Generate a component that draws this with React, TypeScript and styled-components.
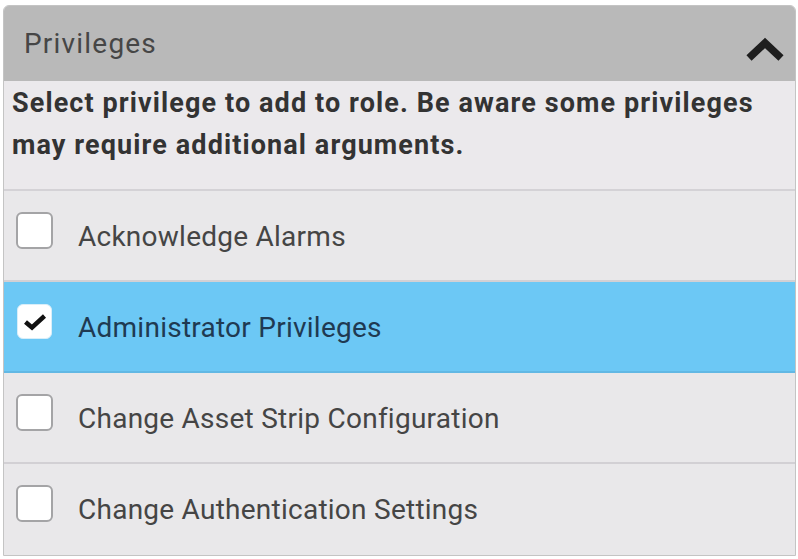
import styled, { createGlobalStyle } from 'styled-components';

const GlobalStyle = createGlobalStyle`
  body {
    margin: 0;
    background: #ffffff;
    font-family: Roboto, "Liberation Sans", sans-serif;
  }
`;

const privileges = [
  { name: 'Acknowledge Alarms', checked: false },
  { name: 'Administrator Privileges', checked: true },
  { name: 'Change Asset Strip Configuration', checked: false },
  { name: 'Change Authentication Settings', checked: false },
];

export default function App() {
  return (
    <>
      <GlobalStyle />
      <Panel>
        <Header>
          <Title>Privileges</Title>
          <Chevron width="40" height="26" viewBox="0 0 40 26">
            <path d="M4 22 L20 7 L36 22" fill="none" stroke="#1e1e1e" strokeWidth="7.5" />
          </Chevron>
        </Header>
        <Description>
          Select privilege to add to role. Be aware some privileges may require additional arguments.
        </Description>
        <List>
          {privileges.map((p) => (
            <Row key={p.name} selected={p.checked}>
              <Box checked={p.checked}>
                {p.checked && (
                  <svg width="24" height="20" viewBox="0 0 24 20">
                    <path d="M2.5 10 L9 15.5 L21.5 4" fill="none" stroke="#111" strokeWidth="4.5" />
                  </svg>
                )}
              </Box>
              <Label selected={p.checked}>{p.name}</Label>
            </Row>
          ))}
        </List>
      </Panel>
    </>
  );
}

const Panel = styled.div`
  margin: 5px 0 0 3px;
  width: 791px;
  border: 1px solid #c4c4c4;
  border-radius: 6px 6px 0 0;
  overflow: hidden;
  background: #e9e8ea;
`;

const Header = styled.div`
  height: 75px;
  background: #b9b9b9;
  display: flex;
  align-items: center;
  justify-content: space-between;
  padding: 0 10px 0 20px;
`;

const Title = styled.div`
  font-size: 28px;
  letter-spacing: 1.2px;
  color: #464646;
  margin-top: -1px;
`;

const Chevron = styled.svg`
  margin-top: 10px;
`;

const Description = styled.div`
  background: #ebe9ec;
  font-size: 27px;
  letter-spacing: 1.1px;
  font-weight: 700;
  color: #333333;
  line-height: 42px;
  padding: 1px 10px 23px 8px;
  border-bottom: 2px solid #d4d2d6;
`;

const List = styled.div`
  display: flex;
  flex-direction: column;
`;

const Row = styled.div<{ selected: boolean }>`
  height: 91px;
  box-sizing: border-box;
  display: flex;
  align-items: flex-start;
  gap: 25px;
  padding: 21px 0 0 12px;
  background: ${(p) => (p.selected ? '#6cc8f5' : '#e9e8ea')};
  border-bottom: 2px solid ${(p) => (p.selected ? '#62b8e4' : '#d2d0d4')};
  &:last-child {
    border-bottom: none;
  }
`;

const Box = styled.div<{ checked: boolean }>`
  width: ${(p) => (p.checked ? 35 : 37)}px;
  height: ${(p) => (p.checked ? 35 : 37)}px;
  margin: ${(p) => (p.checked ? '1px 1px 0 1px' : '0')};
  box-sizing: border-box;
  border-radius: 6px;
  border: ${(p) => (p.checked ? '1px solid #d8eef9' : '2px solid #a4a4a6')};
  background: #ffffff;
  display: flex;
  align-items: center;
  justify-content: center;
  flex-shrink: 0;
`;

const Label = styled.div<{ selected: boolean }>`
  font-size: 28px;
  line-height: 32px;
  letter-spacing: 0.25px;
  margin-top: 9px;
  color: ${(p) => (p.selected ? '#1f3a52' : '#454545')};
`;
